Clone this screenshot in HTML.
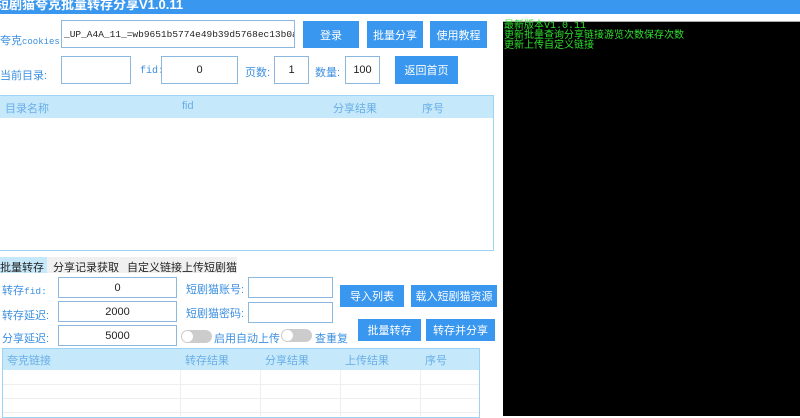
<!DOCTYPE html>
<html><head><meta charset="utf-8"><style>
*{margin:0;padding:0;box-sizing:border-box}
body{width:800px;height:416px;overflow:hidden;background:#fff;position:relative;font-family:"Liberation Sans","Noto Sans CJK SC",sans-serif;font-size:11px;color:#3b8fe0}
.a{position:absolute}
.in{position:absolute;border:1px solid #8cb7df;background:#fff;color:#222;text-align:center;font-size:11px;display:flex;align-items:center;justify-content:center}
.bt{position:absolute;background:#3a97ef;color:#fff;font-size:11px;display:flex;align-items:center;justify-content:center}
.lb{position:absolute;color:#3b8fe0;font-size:11px;white-space:nowrap}
.th{position:absolute;background:#c5e8fb;color:#6aaee6;font-size:10.5px}
.tg{position:absolute;width:31px;height:13px;border-radius:7px;background:#ccc}
.tg:before{content:"";position:absolute;left:1px;top:1px;width:11px;height:11px;border-radius:50%;background:#fff}
</style></head><body>
<div class="a" style="left:0;top:0;width:800px;height:14px;background:#3a97ef"></div>
<div class="a" style="left:-4px;top:-6px;color:#fff;font-weight:bold;font-size:13px;white-space:nowrap">短剧猫夸克批量转存分享V1.0.11</div>
<div class="a" style="left:503px;top:21px;width:297px;height:395px;background:#000;border-top:1px solid #aaa"></div>
<div class="a" style="left:504px;top:22px;color:#2fe02f;font-family:'Liberation Mono','Noto Sans CJK SC',monospace;font-size:10px;line-height:10px;white-space:nowrap">最新版本V1.0.11<br>更新批量查询分享链接游览次数保存次数<br>更新上传自定义链接</div>

<div class="lb" style="left:0;top:32px">夸克<span style="font-family:'Liberation Mono',monospace;font-size:9px">cookies:</span></div>
<div class="in" style="left:61px;top:20px;width:234px;height:28px;justify-content:flex-start;padding-left:2px;font-family:'Liberation Mono',monospace;font-size:9.5px;overflow:hidden;white-space:nowrap">_UP_A4A_11_=wb9651b5774e49b39d5768ec13b0a72e</div>
<div class="bt" style="left:303px;top:21px;width:56px;height:27px">登录</div>
<div class="bt" style="left:367px;top:21px;width:56px;height:27px">批量分享</div>
<div class="bt" style="left:430px;top:21px;width:57px;height:27px">使用教程</div>

<div class="lb" style="left:0;top:67px">当前目录:</div>
<div class="in" style="left:61px;top:56px;width:70px;height:28px"></div>
<div class="lb" style="left:140px;top:66px;font-family:'Liberation Mono',monospace;font-size:10px">fid:</div>
<div class="in" style="left:161px;top:56px;width:77px;height:28px">0</div>
<div class="lb" style="left:245px;top:64px">页数:</div>
<div class="in" style="left:274px;top:56px;width:35px;height:28px">1</div>
<div class="lb" style="left:315px;top:64px">数量:</div>
<div class="in" style="left:345px;top:56px;width:35px;height:28px">100</div>
<div class="bt" style="left:395px;top:56px;width:63px;height:28px">返回首页</div>

<div class="a" style="left:0;top:95px;width:494px;height:156px;border:1px solid #9fd3f3;border-left:none"></div>
<div class="th" style="left:0;top:96px;width:493px;height:22px"></div>
<div class="lb" style="left:5px;top:100px;color:#6aaee6">目录名称</div>
<div class="lb" style="left:182px;top:100px;color:#6aaee6">fid</div>
<div class="lb" style="left:333px;top:100px;color:#6aaee6">分享结果</div>
<div class="lb" style="left:422px;top:100px;color:#6aaee6">序号</div>

<div class="a" style="left:0;top:257px;width:47px;height:16px;background:#c5e8fb"></div>
<div class="a" style="left:47px;top:257px;width:190px;height:16px;background:#f0f0f0"></div>
<div class="lb" style="left:0;top:259px;color:#222">批量转存</div>
<div class="lb" style="left:53px;top:259px;color:#222">分享记录获取</div>
<div class="lb" style="left:127px;top:259px;color:#222">自定义链接上传短剧猫</div>

<div class="lb" style="left:2px;top:282px">转存<span style="font-family:'Liberation Mono',monospace;font-size:9.5px">fid:</span></div>
<div class="in" style="left:58px;top:277px;width:119px;height:21px">0</div>
<div class="lb" style="left:2px;top:307px">转存延迟:</div>
<div class="in" style="left:58px;top:301px;width:119px;height:21px">2000</div>
<div class="lb" style="left:2px;top:330px">分享延迟:</div>
<div class="in" style="left:58px;top:325px;width:119px;height:21px">5000</div>
<div class="lb" style="left:186px;top:281px">短剧猫账号:</div>
<div class="in" style="left:248px;top:277px;width:85px;height:21px"></div>
<div class="lb" style="left:186px;top:305px">短剧猫密码:</div>
<div class="in" style="left:248px;top:302px;width:85px;height:21px"></div>
<div class="tg" style="left:181px;top:330px"></div>
<div class="lb" style="left:214px;top:330px">启用自动上传</div>
<div class="tg" style="left:281px;top:329px"></div>
<div class="lb" style="left:315px;top:330px">查重复</div>
<div class="bt" style="left:340px;top:285px;width:64px;height:22px">导入列表</div>
<div class="bt" style="left:411px;top:285px;width:86px;height:22px">载入短剧猫资源</div>
<div class="bt" style="left:358px;top:319px;width:63px;height:22px">批量转存</div>
<div class="bt" style="left:426px;top:319px;width:69px;height:22px">转存并分享</div>

<div class="a" style="left:2px;top:348px;width:478px;height:70px;border:1px solid #9fd3f3"></div>
<div class="th" style="left:3px;top:349px;width:476px;height:21px"></div>
<div class="lb" style="left:7px;top:352px;color:#6aaee6">夸克链接</div>
<div class="lb" style="left:185px;top:352px;color:#6aaee6">转存结果</div>
<div class="lb" style="left:265px;top:352px;color:#6aaee6">分享结果</div>
<div class="lb" style="left:345px;top:352px;color:#6aaee6">上传结果</div>
<div class="lb" style="left:425px;top:352px;color:#6aaee6">序号</div>
<div class="a" style="left:3px;top:384px;width:476px;border-top:1px solid #eee"></div>
<div class="a" style="left:3px;top:398px;width:476px;border-top:1px solid #eee"></div>
<div class="a" style="left:3px;top:412px;width:476px;border-top:1px solid #eee"></div>
<div class="a" style="left:180px;top:370px;height:46px;border-left:1px solid #eee"></div>
<div class="a" style="left:260px;top:370px;height:46px;border-left:1px solid #eee"></div>
<div class="a" style="left:340px;top:370px;height:46px;border-left:1px solid #eee"></div>
<div class="a" style="left:420px;top:370px;height:46px;border-left:1px solid #eee"></div>
</body></html>
